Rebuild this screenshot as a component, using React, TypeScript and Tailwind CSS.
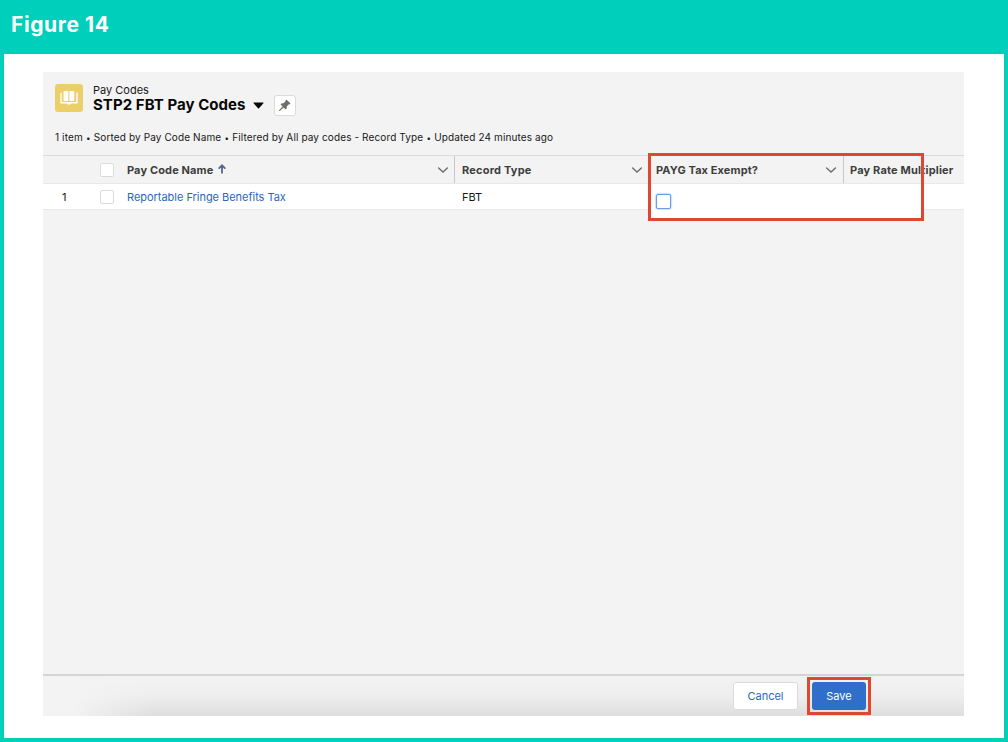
import React from 'react';

const columns = [
  { id: 'name', label: 'Pay Code Name', width: 'w-[336px] pl-2 pr-[5px]', text: 'tracking-[0.13px]', sorted: true, menu: true },
  { id: 'type', label: 'Record Type', width: 'w-[194px] pl-[7px] pr-[5px]', text: 'tracking-[0.2px]', sorted: false, menu: true },
  { id: 'exempt', label: 'PAYG Tax Exempt?', width: 'w-[195px] pl-[7px] pr-[6px]', text: 'tracking-[0.1px]', sorted: false, menu: true },
  { id: 'rate', label: 'Pay Rate Multiplier', width: 'w-[120px] pl-[6px]', text: 'tracking-[0.17px]', sorted: false, menu: false },
];

const summary = [
  '1 item',
  'Sorted by Pay Code Name',
  'Filtered by All pay codes - Record Type',
  'Updated 24 minutes ago',
];

const BookIcon = () => (
  <svg width="20" height="18" viewBox="0 0 20 18" fill="none">
    <rect x="4.5" y="2" width="4.9" height="10" rx="0.7" fill="#fff" />
    <rect x="10.4" y="2" width="4.9" height="10" rx="0.7" fill="#fff" />
    <path d="M2 4.2v9.5h16V4.2" stroke="#fff" strokeWidth="1.4" strokeLinecap="round" strokeLinejoin="round" />
    <path d="M8 13.4h4v1c0 .6-.4 1-1 1H9c-.6 0-1-.4-1-1z" fill="#fff" />
  </svg>
);

const PinIcon = () => (
  <svg width="13" height="13" viewBox="0 0 13 13" fill="#706e6b">
    <path d="M7.8.9c.4-.4.8-.3 1.1 0l3.2 3.2c.3.3.3.7 0 1-.4.4-.8.4-1.2.2L8.7 7.5c.3 1 .1 1.9-.5 2.6-.3.3-.6.3-.9 0L5.6 8.4l-3.8 3.5c-.5.4-1.1-.2-.7-.7l3.5-3.8-1.7-1.7c-.3-.3-.3-.6 0-.9.7-.6 1.6-.8 2.6-.5L7.7 2.1c-.2-.4-.2-.8.1-1.2z" />
  </svg>
);

const ChevronIcon = () => (
  <svg width="12" height="8" viewBox="0 0 12 8" fill="none" stroke="#706e6b" strokeWidth="1.4" strokeLinecap="round">
    <path d="M1.6 1.9L6 6l4.4-4.1" />
  </svg>
);

const SortIcon = () => (
  <svg width="8" height="10" viewBox="0 0 8 10" fill="none" stroke="#54698d" strokeWidth="1.8" strokeLinecap="round">
    <path d="M4 8.8V1.6M1.2 4.1L4 1.3l2.8 2.8" />
  </svg>
);

const Checkbox = () => <span className="block h-[14px] w-[14px] rounded-[2px] border border-[#dddbda] bg-white" />;

const ListHeader = () => (
  <div className="h-[83px] pt-3 pl-3">
    <div className="flex">
      <div className="flex h-7 w-7 items-center justify-center rounded-[3px] bg-[#ebcf68]">
        <BookIcon />
      </div>
      <div className="ml-[10px]">
        <div className="h-3 text-[11px] leading-3 text-[#181818]">Pay Codes</div>
        <div className="flex h-[18px] items-center">
          <h1 className="text-[15px] leading-[18px] font-bold tracking-[0.05px] whitespace-nowrap text-[#080707]">
            STP2 FBT Pay Codes
          </h1>
          <svg className="ml-[7px]" width="11" height="7" viewBox="0 0 11 7" fill="#080707">
            <path d="M.9.5h9.2c.4 0 .5.4.3.7L6 6.2c-.3.3-.7.3-1 0L.6 1.2C.4.9.5.5.9.5z" />
          </svg>
          <button className="ml-[10px] flex h-[21px] w-[22px] items-center justify-center rounded-[3px] border border-[#dddbda] bg-white">
            <PinIcon />
          </button>
        </div>
      </div>
    </div>
    <p className="mt-4 text-[10px] leading-[14px] tracking-[0.12px] whitespace-nowrap text-[#181818]">
      {summary.map((part, i) => (
        <React.Fragment key={part}>
          {i > 0 && <span className="px-px text-[8px] tracking-normal"> • </span>}
          {part}
        </React.Fragment>
      ))}
    </p>
  </div>
);

const Table = () => (
  <div className="relative">
    <div className="flex h-[29px] border-y border-[#dddbda] border-b-[#e8e8e8] text-[11px] font-bold text-[#3e3e3c]">
      <div className="flex w-[76px] items-center justify-end pr-[5px]">
        <Checkbox />
      </div>
      {columns.map((col) => (
        <div
          key={col.id}
          className={`flex shrink-0 items-center whitespace-nowrap ${col.width} ${col.menu ? 'border-r border-[#c9c7c5]' : ''}`}
        >
          <span className={`pt-px ${col.text}`}>{col.label}</span>
          {col.sorted && (
            <span className="ml-[5px] pb-[2px]">
              <SortIcon />
            </span>
          )}
          {col.menu && (
            <span className="ml-auto">
              <ChevronIcon />
            </span>
          )}
        </div>
      ))}
    </div>
    <div className="flex h-[26px] items-center border-b border-[#e8e8e8] bg-white text-[11px] text-[#181818]">
      <div className="flex w-[76px] items-center justify-between pr-[5px] pl-[19px]">
        <span className="pt-px">1</span>
        <Checkbox />
      </div>
      <a className="w-[336px] pt-px pl-2 tracking-[-0.03px] text-[#2a67bd]">Reportable Fringe Benefits Tax</a>
      <span className="w-[194px] pt-px pl-[7px]">FBT</span>
    </div>

    {/* inline edit cell, sits over the row */}
    <div className="absolute top-[-2px] left-[605px] h-[68px] w-[276px] border-[3px] border-[#df4830]">
      <div className="mt-[28px] flex h-[34px] items-center bg-white pl-[5px]">
        <span className="block h-[15px] w-[15px] rounded-[2px] border border-[#6a9ee0] bg-white shadow-[0_0_2px_#5a93dd]" />
      </div>
    </div>
  </div>
);

const Footer = () => (
  <div className="relative h-[42px] border-t-2 border-[#d4d4d4] bg-linear-to-b from-[#f3f3f3] via-[#eeeeee] to-[#dedede]">
    <div className="absolute inset-y-0 left-0 w-[110px] bg-linear-to-r from-[#f3f3f3] from-25% to-transparent" />
    <div className="relative flex h-full items-center justify-end pr-[93px] pb-px text-[11px]">
      <button className="h-7 w-[65px] rounded-[3px] border border-[#dddbda] bg-white pt-px text-[#2a67bd]">Cancel</button>
      <div className="ml-[9px] border-[3px] border-[#df4830] p-[2px]">
        <button className="block h-7 w-[54px] rounded-[3px] bg-[#2f6fca] pt-px text-white">Save</button>
      </div>
    </div>
  </div>
);

const App = () => {
  return (
    <div className="flex h-[742px] w-[1008px] flex-col bg-[#00cfbb] px-1 pb-1 font-['Inter','Liberation_Sans',sans-serif]">
      <header className="flex h-[54px] items-center pb-1 pl-[7px]">
        <span className="text-[21px] font-bold tracking-[0.6px] text-white">Figure 14</span>
      </header>
      <main className="flex-1 bg-white pt-[18px] pl-[39px]">
        <section className="flex h-[644px] w-[921px] flex-col overflow-hidden bg-[#f3f3f3]">
          <ListHeader />
          <Table />
          <div className="flex-1" />
          <Footer />
        </section>
      </main>
    </div>
  );
};

export default App;
